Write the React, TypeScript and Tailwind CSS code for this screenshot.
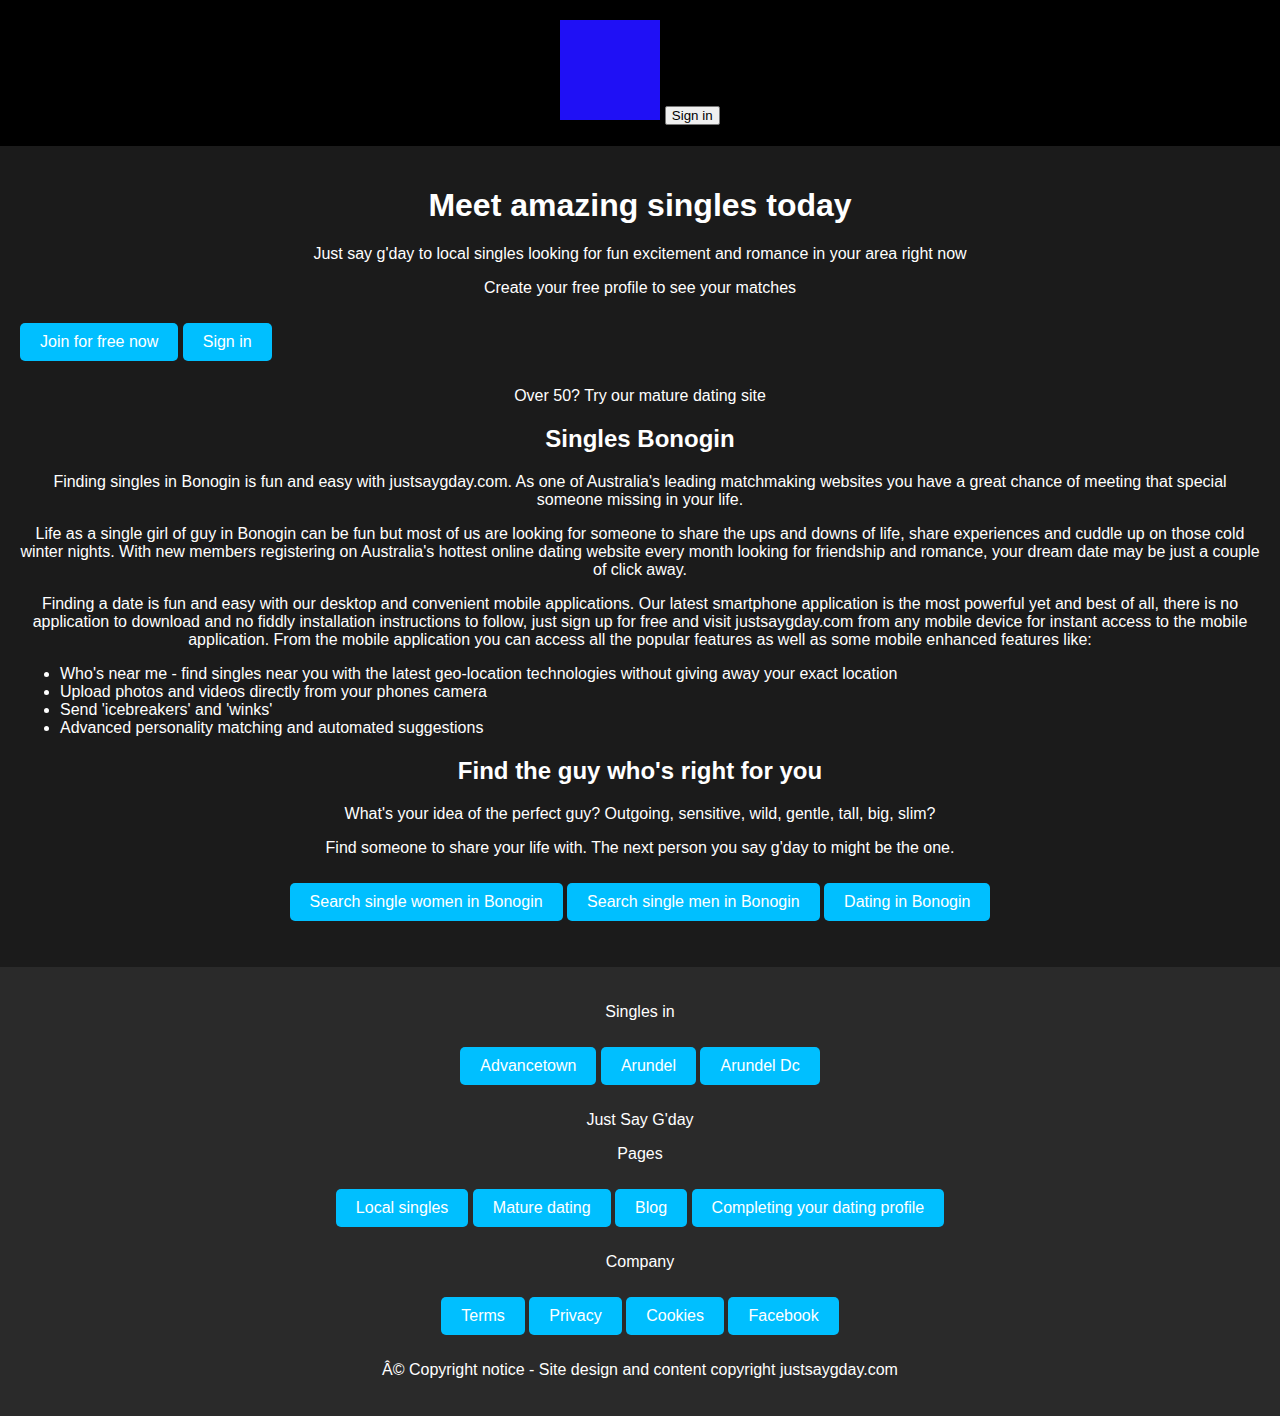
const btn =
  'inline-block rounded-[5px] bg-[#00bfff] px-5 py-[10px] text-white leading-[18px]';

function LinkRow({ items, left = false }: { items: string[]; left?: boolean }) {
  return (
    <div className={`mt-[26px] mb-[26px] ${left ? 'text-left' : 'text-center'}`}>
      {items.map((t, i) => (
        <span key={t}>
          <a href="#" className={btn}>
            {t}
          </a>
          {i < items.length - 1 ? ' ' : ''}
        </span>
      ))}
    </div>
  );
}

export default function App() {
  return (
    <div className="min-h-[1416px] bg-[#2a2a2a] text-white text-[16px] leading-[normal] font-['Liberation_Sans',Arial,sans-serif]">
      {/* top bar */}
      <header className="bg-black px-5 pt-5 pb-[21px] text-center">
        <span className="inline-block h-[100px] w-[100px] bg-[#1f10f5] align-baseline" />{' '}
        <button className="rounded-[2px] border border-[#767676] bg-[#efefef] px-[6px] py-[1px] text-[13.33px] text-black">
          Sign in
        </button>
      </header>

      <main className="bg-[#1b1b1b] p-5 text-center">
        <h1 className="my-[21px] text-[32px] font-bold">Meet amazing singles today</h1>
        <p className="my-4">
          Just say g'day to local singles looking for fun excitement and romance in your area right now
        </p>
        <p className="my-4">Create your free profile to see your matches</p>
        <LinkRow items={['Join for free now', 'Sign in']} left />
        <p className="my-4">Over 50? Try our mature dating site</p>

        <h2 className="my-[20px] text-[24px] font-bold">Singles Bonogin</h2>
        <p className="my-4">
          Finding singles in Bonogin is fun and easy with justsaygday.com. As one of Australia's leading
          matchmaking websites you have a great chance of meeting that special someone missing in your life.
        </p>
        <p className="my-4">
          Life as a single girl of guy in Bonogin can be fun but most of us are looking for someone to share the
          ups and downs of life, share experiences and cuddle up on those cold winter nights. With new members
          registering on Australia's hottest online dating website every month looking for friendship and
          romance, your dream date may be just a couple of click away.
        </p>
        <p className="my-4">
          Finding a date is fun and easy with our desktop and convenient mobile applications. Our latest
          smartphone application is the most powerful yet and best of all, there is no application to download
          and no fiddly installation instructions to follow, just sign up for free and visit justsaygday.com
          from any mobile device for instant access to the mobile application. From the mobile application you
          can access all the popular features as well as some mobile enhanced features like:
        </p>
        <ul className="my-4 list-disc pl-10 text-left">
          <li>Who's near me - find singles near you with the latest geo-location technologies without giving away your exact location</li>
          <li>Upload photos and videos directly from your phones camera</li>
          <li>Send 'icebreakers' and 'winks'</li>
          <li>Advanced personality matching and automated suggestions</li>
        </ul>

        <h2 className="my-[20px] text-[24px] font-bold">Find the guy who's right for you</h2>
        <p className="my-4">
          What's your idea of the perfect guy? Outgoing, sensitive, wild, gentle, tall, big, slim?
        </p>
        <p className="my-4">Find someone to share your life with. The next person you say g'day to might be the one.</p>
        <LinkRow items={['Search single women in Bonogin', 'Search single men in Bonogin', 'Dating in Bonogin']} />
      </main>

      <footer className="bg-[#2a2a2a] p-5 text-center">
        <p className="my-4">Singles in</p>
        <LinkRow items={['Advancetown', 'Arundel', 'Arundel Dc']} />
        <p className="my-4">Just Say G'day</p>
        <p className="my-4">Pages</p>
        <LinkRow items={['Local singles', 'Mature dating', 'Blog', 'Completing your dating profile']} />
        <p className="my-4">Company</p>
        <LinkRow items={['Terms', 'Privacy', 'Cookies', 'Facebook']} />
        <p className="my-4">Â© Copyright notice - Site design and content copyright justsaygday.com</p>
      </footer>
    </div>
  );
}
